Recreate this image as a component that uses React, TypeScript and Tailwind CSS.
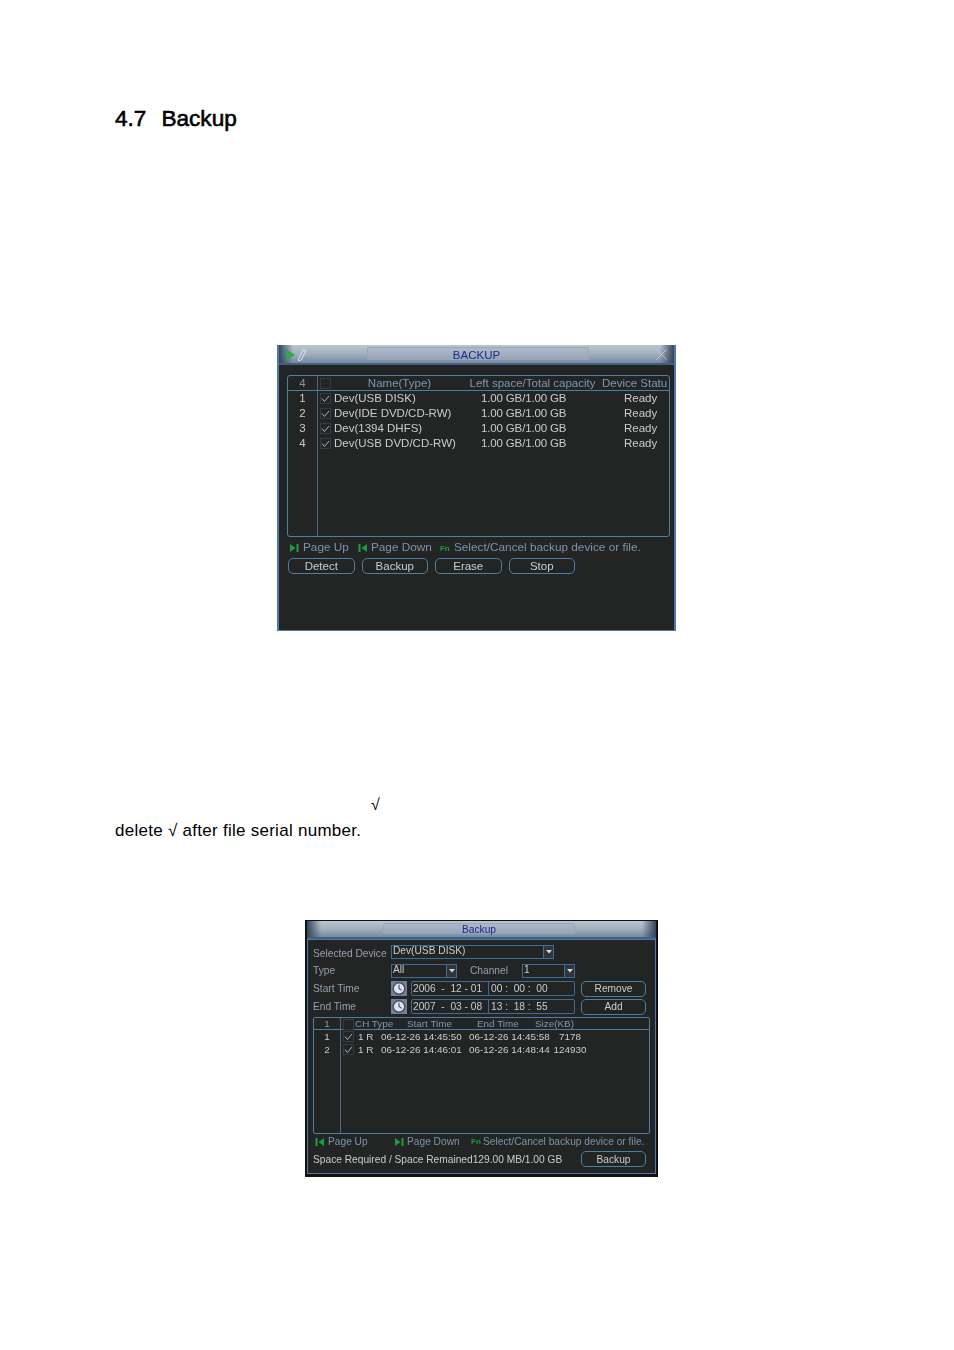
import type { ReactNode } from "react";

const devices = [
  ["1", "Dev(USB DISK)"],
  ["2", "Dev(IDE DVD/CD-RW)"],
  ["3", "Dev(1394 DHFS)"],
  ["4", "Dev(USB DVD/CD-RW)"],
];

const files = [
  ["1", "1 R", "06-12-26 14:45:50", "06-12-26 14:45:58", "7178"],
  ["2", "1 R", "06-12-26 14:46:01", "06-12-26 14:48:44", "124930"],
];

function Check({ on = true }: { on?: boolean }) {
  return (
    <span className="w-[11px] h-[11px] border border-[#303c46] flex items-center justify-center">
      {on && (
        <svg width="9" height="9" viewBox="0 0 9 9" fill="none" stroke="#b9c2c9" strokeWidth="0.9">
          <path d="M1 4.5 L3.4 7.5 L8 2" />
        </svg>
      )}
    </span>
  );
}

function PageIcon({ flip = false }: { flip?: boolean }) {
  return (
    <svg width="10" height="8" viewBox="0 0 10 8" fill="#1f9c3f" className="shrink-0">
      {flip ? (
        <>
          <rect x="0.5" y="0" width="2" height="8" />
          <path d="M9 0 L3.5 4 L9 8 Z" />
        </>
      ) : (
        <>
          <path d="M1 0 L6.5 4 L1 8 Z" />
          <rect x="7.5" y="0" width="2" height="8" />
        </>
      )}
    </svg>
  );
}

function Fn() {
  return <span className="inline-block w-[11px] text-[8px] leading-none font-bold text-[#1f9c3f]">Fn</span>;
}

function Btn({ children, w }: { children: ReactNode; w: string }) {
  return (
    <div className={`${w} h-[16px] flex items-center justify-center rounded-[5px] border border-[#4d7ea3] text-[#c9cdcf]`}>
      {children}
    </div>
  );
}

function Clock() {
  return (
    <svg width="16" height="15" viewBox="0 0 16 15" className="shrink-0">
      <rect width="16" height="15" fill="#77808c" />
      <circle cx="8" cy="7.5" r="5.8" fill="#dfe4ea" stroke="#39506f" strokeWidth="1.4" />
      <path d="M8 3.8 V7.5 L10.6 9.4" fill="none" stroke="#39506f" strokeWidth="1.1" />
    </svg>
  );
}

function Select({ w, children }: { w: string; children: ReactNode }) {
  return (
    <div className={`${w} h-[14px] flex items-center border border-[#3f6c92] text-[#c9cdcf]`}>
      <span className="flex-1 pl-[1px] leading-none">{children}</span>
      <span className="w-[10px] h-full flex items-center justify-center border-l border-[#3f6c92] bg-[#303638]">
        <svg width="6" height="4" viewBox="0 0 6 4" fill="#d5d8da">
          <path d="M0 0 H6 L3 3.5 Z" />
        </svg>
      </span>
    </div>
  );
}

function DateBox({ date, time }: { date: string; time: string }) {
  return (
    <div className="w-[164px] h-[15px] flex items-center border border-[#3f6c92] rounded-[2px] text-[#c9cdcf] whitespace-pre leading-none">
      <span className="w-[77px] pl-[1px] pt-[1px] border-r border-[#3f6c92] h-full flex items-center">{date}</span>
      <span className="pl-[2px] pt-[1px]">{time}</span>
    </div>
  );
}

function TitleBar({ h, children, tab }: { h: string; children: ReactNode; tab: string }) {
  return (
    <div className={`${h} relative flex items-center justify-center bg-gradient-to-b from-[#bcc4d0] via-[#a3afc0] to-[#748aa4] border-b-2 border-[#42607e]`}>
      <div className="absolute left-0 inset-y-0 w-[14px] bg-gradient-to-r from-[#33455c]" />
      <div className="absolute right-0 inset-y-0 w-[14px] bg-gradient-to-l from-[#33455c]" />
      <div className={`absolute top-[2px] bottom-[3px] ${tab} border border-[#9aa7b8] bg-[#a6b2c2]/40 rounded-t-[2px]`} />
      {children}
    </div>
  );
}

function BackupPanel() {
  return (
    <div className="w-[399px] h-[286px] flex flex-col bg-[#222524] border-x-2 border-b border-[#4d78a8] font-['Liberation_Sans',sans-serif] text-[11.5px] leading-[15px] blur-[0.3px]">
      <TitleBar h="h-[20px]" tab="left-[88px] w-[222px]">
        <span className="relative pt-[2px] text-[#1a2a8c]">BACKUP</span>
        <svg width="24" height="14" viewBox="0 0 24 14" className="absolute left-[6px] top-[3px]">
          <path d="M1 1 L10 7 L1 13 Z" fill="#3aa04a" />
          <path d="M13 12 L18 2 Q21 1 20.5 4 L16 12 Q13.500 13.500 13 12 Z" fill="none" stroke="#dfe6ec" strokeWidth="1" />
        </svg>
        <svg width="11" height="11" viewBox="0 0 11 11" className="absolute right-[7px] top-[4px]" stroke="#c2c9d2" strokeWidth="1">
          <path d="M0.5 0.5 L10.500 10.500 M10.500 0.5 L0.5 10.500" />
        </svg>
      </TitleBar>

      <div className="mt-[10px] ml-[8px] w-[383px] h-[162px] flex flex-col border border-[#4d7ea8] rounded-[3px] text-[#c9cdcf]">
        <div className="grid grid-cols-[30px_14px_135px_133px_69px] h-[15px] border-b border-[#4d7ea8] text-[#7e97b5] whitespace-nowrap">
          <span className="text-center border-r border-[#4d6a85]">4</span>
          <span className="flex items-center justify-center"><Check on={false} /></span>
          <span className="text-center">Name(Type)</span>
          <span className="text-center -ml-[2px]">Left space/Total capacity</span>
          <span className="pl-[2px]">Device Statu</span>
        </div>
        {devices.map(([n, name]) => (
          <div key={n} className="grid grid-cols-[30px_14px_135px_133px_69px] h-[15px] whitespace-nowrap">
            <span className="text-center border-r border-[#4d6a85]">{n}</span>
            <span className="flex items-center justify-center"><Check /></span>
            <span className="pl-[2px]">{name}</span>
            <span className="pl-[14px] tracking-[-0.15px]">1.00 GB/1.00 GB</span>
            <span className="pl-[24px]">Ready</span>
          </div>
        ))}
        <div className="flex-1 w-[30px] border-r border-[#4d6a85]" />
      </div>

      <div className="mt-[3px] h-[15px] ml-[10px] flex items-center text-[11.8px] text-[#7e93ac] whitespace-nowrap">
        <PageIcon />
        <span className="ml-[4px]">Page Up</span>
        <span className="ml-[9px]"><PageIcon flip /></span>
        <span className="ml-[3px]">Page Down</span>
        <span className="ml-[8px]"><Fn /></span>
        <span className="ml-[3px]">Select/Cancel backup device or file.</span>
      </div>

      <div className="mt-[3px] ml-[9px] flex gap-[7px]">
        <Btn w="w-[66.5px]">Detect</Btn>
        <Btn w="w-[66.5px]">Backup</Btn>
        <Btn w="w-[66.5px]">Erase</Btn>
        <Btn w="w-[66.5px]">Stop</Btn>
      </div>
    </div>
  );
}

function SearchPanel() {
  return (
    <div className="w-[353px] h-[257px] flex flex-col bg-[#222524] border-l-2 border-r-2 border-t border-b-[3px] border-[#111] font-['Liberation_Sans',sans-serif] text-[10.2px] leading-[13px] blur-[0.4px]">
      <TitleBar h="h-[18px]" tab="left-[76px] w-[192px]">
        <span className="relative text-[#1a2a8c] pr-[5px]">Backup</span>
      </TitleBar>

      <div className="flex-1 flex flex-col border border-[#4d78a8] pl-[5px] text-[#93a0ad] whitespace-nowrap">
        <div className="flex items-center mt-[4px] h-[15px]">
          <span className="w-[78px] pt-[3px]">Selected Device</span>
          <Select w="w-[163px]">Dev(USB DISK)</Select>
        </div>
        <div className="flex items-center mt-[4px] h-[15px]">
          <span className="w-[78px]">Type</span>
          <Select w="w-[66px]">All</Select>
          <span className="ml-[13px] w-[52px]">Channel</span>
          <Select w="w-[53px]">1</Select>
        </div>
        <div className="flex items-center mt-[3px] h-[15px]">
          <span className="w-[78px]">Start Time</span>
          <Clock />
          <span className="ml-[4px]"><DateBox date="2006  -  12 - 01" time="00 :  00 :  00" /></span>
          <span className="ml-[6px]"><Btn w="w-[65px]">Remove</Btn></span>
        </div>
        <div className="flex items-center mt-[3px] h-[15px]">
          <span className="w-[78px]">End Time</span>
          <Clock />
          <span className="ml-[4px]"><DateBox date="2007  -  03 - 08" time="13 :  18 :  55" /></span>
          <span className="ml-[6px]"><Btn w="w-[65px]">Add</Btn></span>
        </div>

        <div className="mt-[3px] w-[337px] h-[117px] flex flex-col border border-[#4d7ea8] rounded-[2px] text-[9.9px] text-[#c9cdcf]">
          <div className="grid grid-cols-[27px_14px_52px_70px_58px_auto] h-[12px] border-b border-[#4d7ea8] text-[#7e97b5] leading-[12px]">
            <span className="text-center border-r border-[#4d6a85]">1</span>
            <span className="flex items-center justify-center"><Check on={false} /></span>
            <span>CH Type</span>
            <span>Start Time</span>
            <span>End Time</span>
            <span>Size(KB)</span>
          </div>
          {files.map((f) => (
            <div key={f[0]} className="grid grid-cols-[27px_14px_26px_88px_81px_40px] h-[13px]">
              <span className="text-center border-r border-[#4d6a85]">{f[0]}</span>
              <span className="flex items-center justify-center"><Check /></span>
              <span className="pl-[3px]">{f[1]}</span>
              <span>{f[2]}</span>
              <span>{f[3]}</span>
              <span className="text-center">{f[4]}</span>
            </div>
          ))}
          <div className="flex-1 w-[27px] border-r border-[#4d6a85]" />
        </div>

        <div className="mt-[1px] h-[13px] ml-[2px] flex items-center text-[#7e93ac]">
          <PageIcon flip />
          <span className="ml-[3px] w-[66px]">Page Up</span>
          <PageIcon />
          <span className="ml-[3px] w-[64px]">Page Down</span>
          <Fn />
          <span className="ml-[1px]">Select/Cancel backup device or file.</span>
        </div>

        <div className="mt-[3px] flex items-center">
          <span className="w-[268px] text-[#c9cdcf]">Space Required / Space Remained129.00 MB/1.00 GB</span>
          <Btn w="w-[65px]">Backup</Btn>
        </div>
      </div>
    </div>
  );
}

export default function App() {
  return (
    <div className="w-[954px] h-[1350px] bg-white text-black font-['Liberation_Sans',sans-serif] overflow-hidden">
      <h2 className="pt-[106px] pl-[115px] flex gap-[15px] text-[22.6px] leading-[26px] font-normal [-webkit-text-stroke:0.6px_black]">
        <span>4.7</span>
        <span>Backup</span>
      </h2>

      <div className="mt-[213px] ml-[277px]">
        <BackupPanel />
      </div>

      <div className="mt-[164px] pl-[371px] text-[16px] leading-[20px]">√</div>
      <p className="mt-[6px] pl-[115px] text-[17px] leading-[20px] tracking-[0.27px]">delete √ after file serial number.</p>

      <div className="mt-[79px] ml-[305px]">
        <SearchPanel />
      </div>
    </div>
  );
}
